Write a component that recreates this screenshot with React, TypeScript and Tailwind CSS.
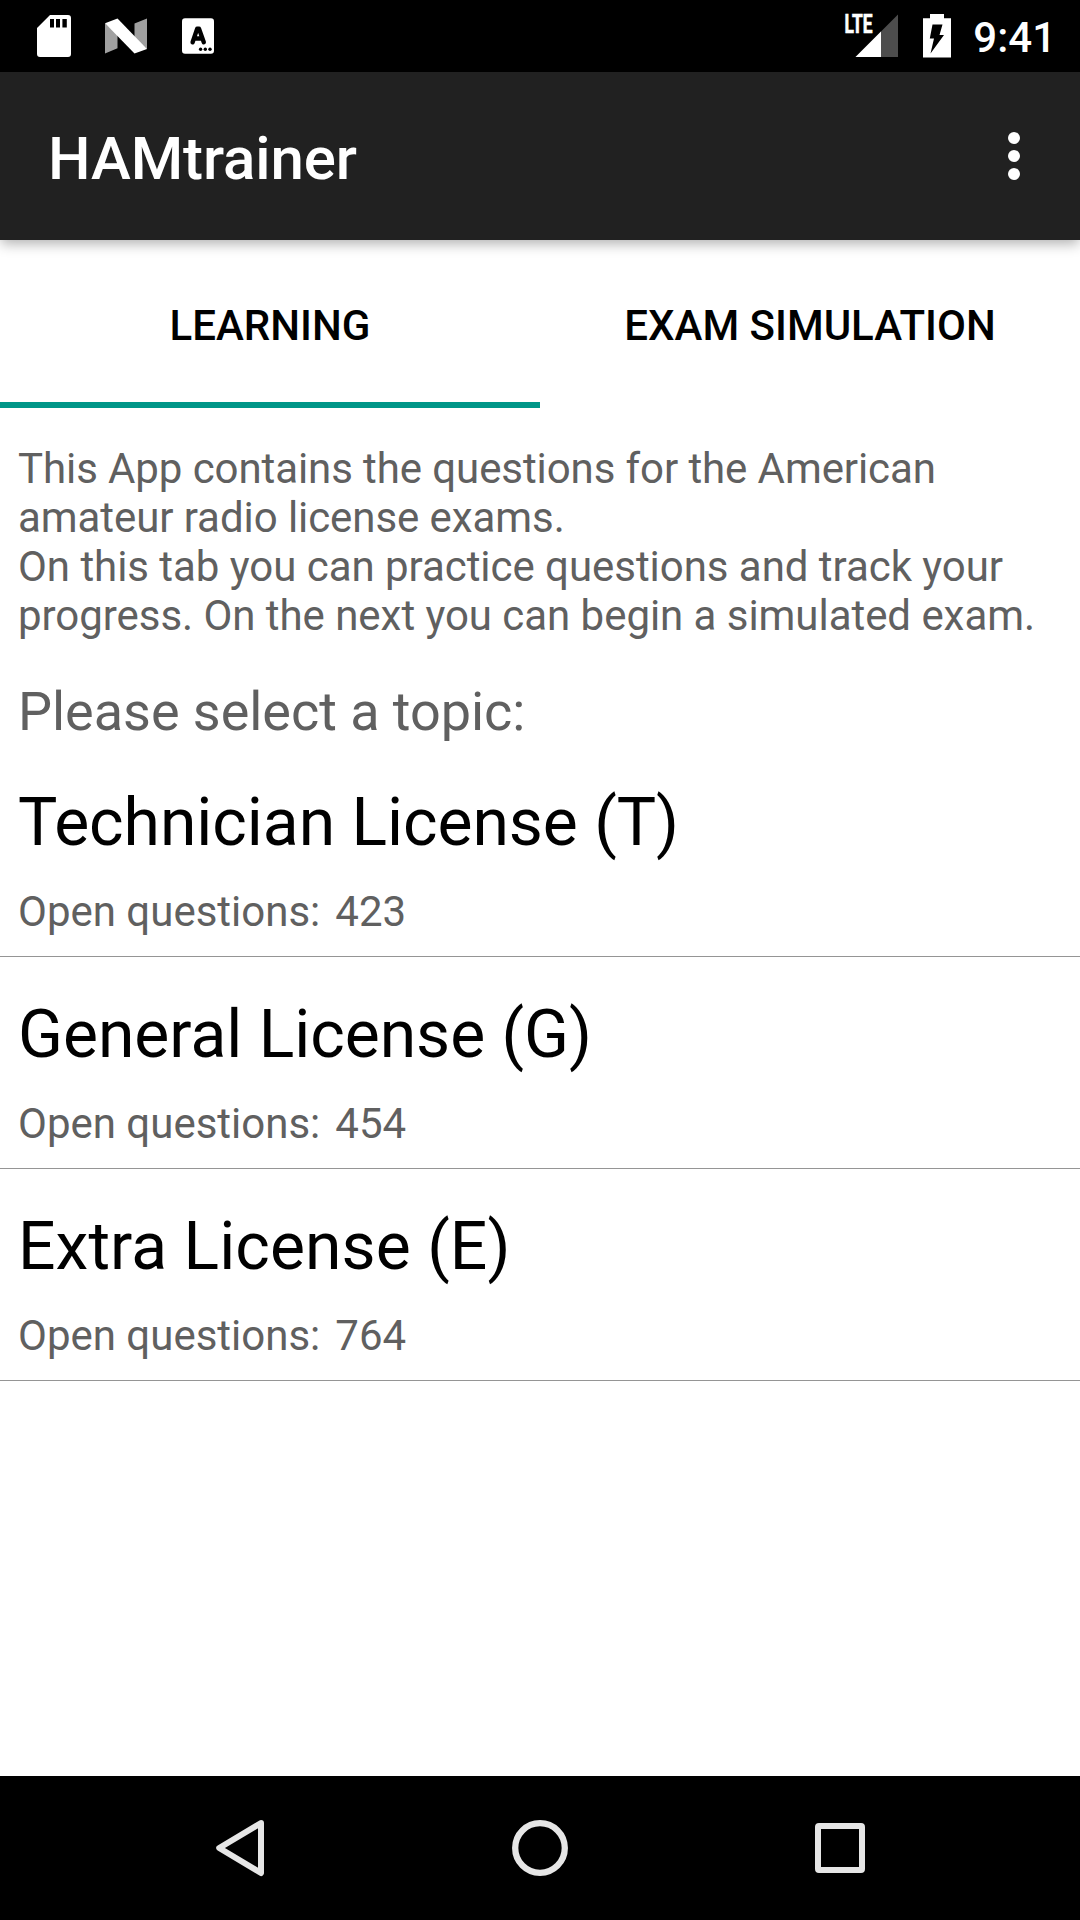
const topics = [
  { name: 'Technician License (T)', open: 423, tracking: 'tracking-[-0.04px]' },
  { name: 'General License (G)', open: 454, tracking: 'tracking-[-0.02px]' },
  { name: 'Extra License (E)', open: 764, tracking: 'tracking-[0.07px]' },
];

function StatusBar() {
  return (
    <div className="flex h-[72px] shrink-0 items-center bg-black pl-[36px] pr-[24px] text-white">
      <svg className="h-[72px] w-[36px]" viewBox="36 0 36 72" fill="#fff">
        <path fillRule="evenodd" d="M50 15H68a3 3 0 0 1 3 3V54a3 3 0 0 1-3 3H40a3 3 0 0 1-3-3V28zM50 19v8.6h4V19zM56 19v8.6h4V19zM62.4 19v8.6h4.4V19z" />
      </svg>
      <svg className="ml-[32px] h-[72px] w-[44px]" viewBox="104 0 44 72">
        <path d="M105 23.3L117.5 34v14.3L105 53.5zM134.5 23.5L147 18.5v30.8L134.5 38z" fill="#a0a0a0" />
        <path d="M105 23.3L117.5 18.5L147 49L134.5 53.5z" fill="#fff" />
      </svg>
      <svg className="ml-[34px] h-[72px] w-[32px]" viewBox="182 0 32 72">
        <rect x="182" y="18.3" width="32" height="35.4" rx="3" fill="#fff" />
        <path d="M192.6 42.3L197.2 28.8h1.8L203.8 42.3M194.6 38.5h7.2" stroke="#000" strokeWidth="4.4" strokeLinecap="round" strokeLinejoin="round" fill="none" />
        <circle cx="200.6" cy="49.3" r="1.7" />
        <circle cx="205.3" cy="49.3" r="1.7" />
        <circle cx="210" cy="49.3" r="1.7" />
      </svg>
      <svg className="ml-auto h-[72px] w-[56px]" viewBox="843 0 56 72">
        <path d="M855.5 57L898 14.5V57z" fill="#4d4d4d" />
        <path d="M855.5 57L881 31.5V57z" fill="#fff" />
        <text x="844.5" y="33.4" textLength="28" lengthAdjust="spacingAndGlyphs" fontSize="26" fontWeight="700" fill="#fff" stroke="#fff" strokeWidth="0.7">LTE</text>
      </svg>
      <svg className="ml-[24px] h-[72px] w-[28px]" viewBox="923 0 28 72">
        <path fillRule="evenodd" d="M930 14h14v4.2h7v39.3h-28V18.2h7zM932.5 24.5L929.8 38.5H934L930.5 53.5L944 35H939.5L942.5 24.5z" fill="#fff" />
      </svg>
      <span className="ml-[22px] pt-[2px] text-[42px] font-medium">9:41</span>
    </div>
  );
}

function NavigationBar() {
  return (
    <footer className="flex h-[144px] shrink-0 items-center justify-center gap-[240px] bg-black">
      <svg className="size-[60px]" viewBox="0 0 60 60" fill="none" stroke="#e6e6e6" strokeWidth="6" strokeLinejoin="round">
        <path d="M51 5L9.2 30L51 55z" />
      </svg>
      <svg className="size-[60px]" viewBox="0 0 60 60" fill="none" stroke="#e6e6e6" strokeWidth="6.3">
        <circle cx="30" cy="30" r="24.8" />
      </svg>
      <div className="flex size-[60px] items-center justify-center">
        <div className="size-[50px] rounded-[4px] border-6 border-[#e6e6e6]" />
      </div>
    </footer>
  );
}

export default function App() {
  return (
    <div className="flex h-[1920px] w-[1080px] flex-col bg-white font-['Roboto',sans-serif] text-black">
      <StatusBar />
      <header className="relative flex h-[168px] shrink-0 items-center justify-between bg-[#212121] pl-[48px] pr-[60px] text-white shadow-[0_5px_12px_-1px_rgba(0,0,0,0.3)]">
        <h1 className="pt-[5px] text-[60px] font-medium tracking-[-0.1px]">HAMtrainer</h1>
        <svg className="h-[48px] w-[12px]" viewBox="0 0 12 48" fill="#fff">
          <circle cx="6" cy="6" r="6" />
          <circle cx="6" cy="24" r="6" />
          <circle cx="6" cy="42" r="6" />
        </svg>
      </header>
      <nav className="grid h-[168px] shrink-0 grid-cols-2 text-center text-[42px] font-medium leading-[172px]">
        <div className="h-[168px] border-b-6 border-[#009688]">LEARNING</div>
        <div className="h-[168px]">EXAM SIMULATION</div>
      </nav>
      <main className="flex-1">
        <p className="mt-[36px] px-[18px] text-[42px] leading-[49px] text-[#606060]">
          <span className="tracking-[-0.09px]">This App contains the questions for the American</span>
          <br />
          <span className="tracking-[-0.07px]">amateur radio license exams.</span>
          <br />
          <span className="tracking-[-0.04px]">On this tab you can practice questions and track your</span>
          <br />
          <span className="tracking-[-0.045px]">progress. On the next you can begin a simulated exam.</span>
        </p>
        <h2 className="mt-[40px] mb-[1px] px-[18px] text-[54px] leading-[64px] tracking-[-0.04px] text-[#606060]">Please select a topic:</h2>
        {topics.map((t) => (
          <div key={t.name} className="h-[212px] border-b border-[#959595] px-[18px] pt-[39px]">
            <div className={`text-[66px] leading-[78px] ${t.tracking}`}>{t.name}</div>
            <div className="mt-[25px] flex gap-[15px] text-[42px] leading-[49px] text-[#606060]">
              <span>Open questions:</span>
              <span>{t.open}</span>
            </div>
          </div>
        ))}
      </main>
      <NavigationBar />
    </div>
  );
}
